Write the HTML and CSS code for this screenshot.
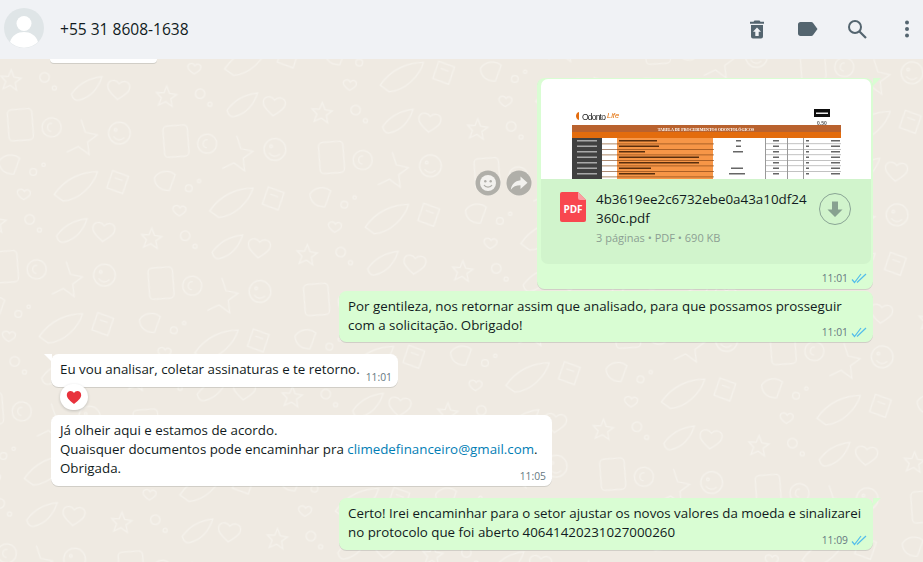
FILE: index.html
```html
<!DOCTYPE html>
<html lang="pt">
<head>
<meta charset="utf-8">
<title>Conversa</title>
<link rel="stylesheet" href="styles.css">
</head>
<body>
<div class="app">
  <header class="topbar">
    <svg class="avatar" viewBox="0 0 40 40"><circle cx="20" cy="20" r="20" fill="#dfe5e7"/><circle cx="20" cy="15.500" r="7.500" fill="#fff"/><path d="M6 34c2-7 8-10 14-10s12 3 14 10a20 20 0 0 1-28 0z" fill="#fff"/></svg>
    <div class="contact">+55 31 8608-1638</div>
    <div class="actions">
      <svg class="icon" viewBox="0 0 24 24"><path fill="#54656f" d="M9.500 3.500h5l1 1.300H19v2H5v-2h3.500zM6 8h12v11.500a2 2 0 0 1-2 2H8a2 2 0 0 1-2-2z"/><path fill="#f0f2f5" d="M12 10.500l4 4.200h-2.300V19h-3.400v-4.300H8z"/></svg>
      <svg class="icon" viewBox="0 0 24 24"><path fill="#54656f" d="M5.500 5h10.700c.8 0 1.500.4 1.900 1l4.400 6-4.400 6c-.4.600-1.100 1-1.900 1H5.500C4 19 3 18 3 16.500v-9C3 6 4 5 5.500 5z"/></svg>
      <svg class="icon" viewBox="0 0 24 24"><circle cx="10" cy="10" r="6" fill="none" stroke="#54656f" stroke-width="2"/><path d="M14.500 14.500l6.500 6.500" stroke="#54656f" stroke-width="2.200" fill="none"/></svg>
      <svg class="icon" viewBox="0 0 24 24"><circle cx="12" cy="5.500" r="2" fill="#54656f"/><circle cx="12" cy="12" r="2" fill="#54656f"/><circle cx="12" cy="18.500" r="2" fill="#54656f"/></svg>
    </div>
  </header>

  <main class="chat">
    <svg class="wallpaper" width="923" height="503">
      <defs>
        <pattern id="doodle" width="230" height="210" patternUnits="userSpaceOnUse" patternTransform="scale(.68) rotate(6)">
          <g fill="none" stroke="#f5f2ec" stroke-width="1.800">
            <path d="M18 14l5 10 11 1-8 7 3 11-10-6-10 6 3-11-8-7 11-1z"/>
            <circle cx="68" cy="20" r="7"/><circle cx="84" cy="34" r="3"/>
            <path d="M110 40c10-18 24-26 42-30-4 18-14 32-30 38-6 2-10-2-12-8z"/>
            <path d="M178 18c6-8 18-4 16 6-1 7-10 12-16 17-6-5-15-10-16-17-2-10 10-14 16-6z"/>
            <rect x="22" y="70" width="36" height="46" rx="6" transform="rotate(-10 40 93)"/>
            <path d="M86 78c8 0 14 6 14 14s-6 14-14 14-14-6-14-14 6-14 14-14zm0 8a6 6 0 1 0 0 12"/>
            <path d="M128 76l8 18 18 2-13 12 4 18-17-10-16 10"/>
            <circle cx="186" cy="90" r="16"/><circle cx="180" cy="86" r="2"/><path d="M178 96c5 5 11 5 16 0"/>
            <path d="M14 150c6-12 20-14 30-8l-6 24c-12 2-22-4-24-16z"/>
            <circle cx="66" cy="160" r="5"/><circle cx="80" cy="148" r="2.500"/>
            <path d="M100 190c14-26 38-38 60-40-4 20-22 44-46 48z"/>
            <path d="M182 146l24 6-6 26-24-6zM186 156l12 3"/>
            <path d="M56 190c3-5 10-3 9 3-1 4-6 7-9 9-4-2-9-5-10-9-1-6 7-8 10-3z"/>
          </g>
        </pattern>
      </defs>
      <rect width="923" height="503" fill="url(#doodle)"/>
    </svg>

    <div class="row in stub"><div class="stub-bubble"></div></div>

    <div class="row out first">
      <div class="reacts">
        <svg class="round" viewBox="0 0 26 26"><circle cx="13" cy="13" r="12.500" fill="#b0afa9"/><circle cx="13" cy="13" r="8" fill="#f2f1ee"/><circle cx="10.300" cy="11.300" r="1.200" fill="#b0afa9"/><circle cx="15.700" cy="11.300" r="1.200" fill="#b0afa9"/><path d="M9 15c1.500 2.800 6.500 2.800 8 0" stroke="#b0afa9" stroke-width="1.200" fill="none"/></svg>
        <svg class="round" viewBox="0 0 26 26"><circle cx="13" cy="13" r="12.500" fill="#b0afa9"/><path d="M14.500 6.500l7 6.200-7 6.300v-3.700c-4.500 0-7.500 1.300-9.700 4.400.7-4.900 3.600-8.700 9.700-9.400z" fill="#f2f1ee"/></svg>
      </div>
      <div class="bubble out-b doc-bubble">
        <svg class="thumb" viewBox="0 0 330 100" width="330" height="100">
          <defs><filter id="soft"><feGaussianBlur stdDeviation="0.700"/></filter></defs>
          <rect width="330" height="100" fill="#fff"/>
          <g filter="url(#soft)">
            <path d="M38 33c-4 1-4 7 0 8z" fill="#e36c0a"/>
            <text x="41" y="41" class="logo">Odonto</text>
            <text x="66" y="39" class="logo-life">Life</text>
            <rect x="273" y="30" width="16" height="8" fill="#111"/>
            <rect x="275" y="33.500" width="12" height="1.500" fill="#eee"/>
            <text x="276" y="46" class="price">0,50</text>
            <rect x="31" y="46" width="269" height="7" fill="#b9622d"/>
            <text x="165" y="51.500" class="ttl" text-anchor="middle">TABELA DE PROCEDIMENTOS ODONTOLÓGICOS</text>
            <rect x="31" y="53" width="269" height="6" fill="#e36c0a"/>
            <rect x="31" y="59" width="30" height="41" fill="#404040"/>
            <rect x="76" y="59" width="96" height="41" fill="#f79646"/>
            <g fill="#5a2f10">
              <rect x="78" y="61" width="38" height="1.500"/><rect x="78" y="66.500" width="40" height="1.500"/><rect x="78" y="72" width="26" height="1.500"/><rect x="78" y="77.500" width="80" height="1.500"/><rect x="78" y="83" width="80" height="1.500"/><rect x="78" y="88.500" width="32" height="1.500"/><rect x="78" y="94" width="36" height="1.500"/>
            </g>
            <g fill="#a8a8a8">
              <rect x="36" y="61" width="20" height="1.500"/><rect x="36" y="66.500" width="20" height="1.500"/><rect x="36" y="72" width="20" height="1.500"/><rect x="36" y="77.500" width="20" height="1.500"/><rect x="36" y="83" width="20" height="1.500"/><rect x="36" y="88.500" width="20" height="1.500"/><rect x="36" y="94" width="20" height="1.500"/>
            </g>
            <g fill="#7a3d12" opacity=".75">
              <rect x="61" y="64.500" width="112" height=".8"/><rect x="61" y="70" width="112" height=".8"/><rect x="61" y="75.500" width="112" height=".8"/><rect x="61" y="81" width="112" height=".8"/><rect x="61" y="86.500" width="112" height=".8"/><rect x="61" y="92" width="112" height=".8"/><rect x="61" y="97.500" width="112" height=".8"/>
            </g>
            <g fill="#999">
              <rect x="224" y="59" width="1" height="41"/><rect x="246" y="59" width="1" height="41"/><rect x="262" y="59" width="1" height="41"/>
              <rect x="224" y="64.500" width="76" height=".6"/><rect x="224" y="70" width="76" height=".6"/><rect x="224" y="75.500" width="76" height=".6"/><rect x="224" y="81" width="76" height=".6"/><rect x="224" y="86.500" width="76" height=".6"/><rect x="224" y="92" width="76" height=".6"/>
            </g>
            <g fill="#666">
              <rect x="195" y="61" width="5" height="1.500"/><rect x="195" y="66.500" width="5" height="1.500"/><rect x="192" y="72" width="10" height="1.500"/><rect x="190" y="88.500" width="12" height="1.500"/><rect x="188" y="94" width="16" height="1.500"/>
              <rect x="232" y="61" width="6" height="1.500"/><rect x="232" y="66.500" width="6" height="1.500"/><rect x="232" y="72" width="6" height="1.500"/><rect x="232" y="77.500" width="6" height="1.500"/><rect x="232" y="83" width="6" height="1.500"/><rect x="232" y="88.500" width="6" height="1.500"/><rect x="232" y="94" width="6" height="1.500"/>
              <rect x="290" y="61" width="9" height="1.500"/><rect x="290" y="66.500" width="9" height="1.500"/><rect x="290" y="72" width="9" height="1.500"/><rect x="290" y="77.500" width="9" height="1.500"/><rect x="290" y="83" width="9" height="1.500"/><rect x="290" y="88.500" width="9" height="1.500"/><rect x="290" y="94" width="9" height="1.500"/>
              <rect x="265" y="61" width="3" height="1.500"/><rect x="265" y="66.500" width="3" height="1.500"/><rect x="265" y="72" width="3" height="1.500"/><rect x="265" y="77.500" width="3" height="1.500"/><rect x="265" y="83" width="3" height="1.500"/><rect x="265" y="88.500" width="3" height="1.500"/><rect x="265" y="94" width="3" height="1.500"/>
            </g>
          </g>
        </svg>
        <div class="doc">
          <svg class="pdf" viewBox="0 0 26 30"><path d="M2 0h16l8 8v20a2 2 0 0 1-2 2H2a2 2 0 0 1-2-2V2a2 2 0 0 1 2-2z" fill="#f8474f"/><path d="M18 0l8 8h-6a2 2 0 0 1-2-2z" fill="#fb9ea2"/><text x="13" y="21" class="pdf-label" text-anchor="middle">PDF</text></svg>
          <div class="doc-info">
            <div class="doc-name">4b3619ee2c6732ebe0a43a10df24<br>360c.pdf</div>
            <div class="doc-meta">3 páginas • PDF • 690 KB</div>
          </div>
          <svg class="download" viewBox="0 0 34 34"><circle cx="17" cy="17" r="15.500" fill="none" stroke="#8aa595" stroke-width="1"/><path d="M14 9.500h6v8h4.500L17 25l-7.500-7.500H14z" fill="#87a190"/></svg>
        </div>
        <div class="stamp doc-stamp">11:01 <svg class="tick" viewBox="0 0 16 11"><path d="M1 6.500l2.500 3L10 1M6 9.500L15 1" fill="none" stroke="#53bdeb" stroke-width="1.200"/></svg></div>
      </div>
    </div>

    <div class="row out second">
      <div class="bubble out-b text-bubble">
        <p class="msg">Por gentileza, nos retornar assim que analisado, para que possamos prosseguir<br>com a solicitação. Obrigado!</p>
        <div class="stamp">11:01 <svg class="tick" viewBox="0 0 16 11"><path d="M1 6.500l2.500 3L10 1M6 9.500L15 1" fill="none" stroke="#53bdeb" stroke-width="1.200"/></svg></div>
      </div>
    </div>

    <div class="row in third">
      <div class="bubble in-b short tail-in">
        <p class="msg">Eu vou analisar, coletar assinaturas e te retorno.</p>
        <div class="stamp">11:01</div>
        <div class="reaction"><svg viewBox="0 0 20 18" class="heart"><path d="M10 17C6 13.500 1 10.500 1 5.800 1 2.800 3.300 1 5.700 1 7.500 1 9 2 10 3.500 11 2 12.500 1 14.300 1 16.700 1 19 2.800 19 5.800c0 4.700-5 7.700-9 11.200z" fill="#e8323c"/></svg></div>
      </div>
    </div>

    <div class="row in fourth">
      <div class="bubble in-b long">
        <p class="msg">Já olheir aqui e estamos de acordo.<br>Quaisquer documentos pode encaminhar pra <span class="link">climedefinanceiro@gmail.com</span>.<br>Obrigada.</p>
        <div class="stamp">11:05</div>
      </div>
    </div>

    <div class="row out fifth">
      <div class="bubble out-b text-bubble tail-out">
        <p class="msg">Certo! Irei encaminhar para o setor ajustar os novos valores da moeda e sinalizarei<br>no protocolo que foi aberto 40641420231027000260</p>
        <div class="stamp">11:09 <svg class="tick" viewBox="0 0 16 11"><path d="M1 6.500l2.500 3L10 1M6 9.500L15 1" fill="none" stroke="#53bdeb" stroke-width="1.200"/></svg></div>
      </div>
    </div>
  </main>
</div>
</body>
</html>
```
FILE: styles.css
```css
* { box-sizing: border-box; }
html, body { margin: 0; padding: 0; height: 100%; overflow: hidden; }
body { font-family: "Open Sans", "Noto Sans", "Liberation Sans", sans-serif; color: #111b21; background: #efeae2; }
.app { display: flex; flex-direction: column; width: 923px; height: 562px; }

.topbar { height: 59px; flex: none; display: flex; align-items: center; padding: 0 4px; background: #f0f2f5; }
.avatar { width: 40px; height: 40px; flex: none; margin-top: -3px; }
.contact { margin-left: 16px; font-size: 15.550px; margin-top: -1px; }
.actions { margin-left: auto; display: flex; gap: 26px; margin-top: -1px; }
.icon { width: 24px; height: 24px; display: block; }

.chat { position: relative; flex: 1; overflow: hidden; background: #efeae2; padding: 0 50px 0 51px; }
.wallpaper { position: absolute; left: 0; top: 0; }
.row { position: relative; display: flex; }
.row.out { justify-content: flex-end; }
.row.in { justify-content: flex-start; }
.stub-bubble { width: 107px; height: 4px; margin-left: -1px; background: #fff; border-radius: 0 0 7px 7px; box-shadow: 0 1px .5px rgba(11,20,26,.13); }
.first { margin-top: 15px; align-items: center; gap: 5px; }
.second { margin-top: 2px; }
.third { margin-top: 12px; }
.fourth { margin-top: 28px; }
.fifth { margin-top: 12px; }

.reacts { display: flex; gap: 5px; margin-top: -1px; }
.round { width: 26px; height: 26px; display: block; }

.bubble { position: relative; border-radius: 7.500px; box-shadow: 0 1px .5px rgba(11,20,26,.13); }
.out-b { background: #d9fdd3; }
.in-b { background: #fff; }
.msg { margin: 0; font-size: 13.330px; line-height: 19px; white-space: nowrap; }
.link { color: #027eb5; }

.text-bubble { width: 534px; height: 51px; padding: 6px 9px; }
.fifth .text-bubble { height: 52px; }
.short { width: 347px; height: 33px; padding: 6px 9px; }
.long { width: 501px; height: 71px; padding: 6px 9px; }

.stamp { position: absolute; right: 6px; bottom: 2px; display: flex; align-items: center; gap: 3px; font-size: 10.300px; line-height: 15px; color: #667781; }
.tick { width: 16px; height: 11px; display: block; }

.doc-bubble { width: 336px; height: 211px; padding: 1px 2px 3px 4px; }
.thumb { display: block; border-radius: 7px 7px 0 0; }
.doc { width: 330px; height: 85px; display: flex; align-items: flex-start; background: #d1f4cc; border-radius: 0 0 7px 7px; padding: 11px 19px 0 19px; }
.pdf { width: 26px; height: 30px; flex: none; margin-top: 2px; }
.pdf-label { font: 700 10px "Open Sans", sans-serif; fill: #fff; }
.doc-info { margin-left: 10px; flex: 1; }
.doc-name { font-size: 13.400px; line-height: 19px; white-space: nowrap; }
.doc-meta { margin-top: 2px; font-size: 11px; line-height: 16px; color: #8c9f93; }
.download { width: 34px; height: 34px; flex: none; margin-top: 2px; }
.doc-stamp { bottom: 3px; }

.reaction { position: absolute; left: 9px; top: 30px; width: 28px; height: 26px; display: flex; align-items: center; justify-content: center; background: #fff; border-radius: 13px; box-shadow: 0 1px 3px rgba(11,20,26,.2); }
.heart { width: 16px; height: 15px; display: block; }

.tail-in::before { content: ""; position: absolute; left: -7px; top: 0; border-style: solid; border-width: 0 8px 8px 0; border-color: transparent #fff transparent transparent; }
.tail-out::after, .doc-bubble::after { content: ""; position: absolute; right: -8px; top: 0; border-style: solid; border-width: 8px 8px 0 0; border-color: #d9fdd3 transparent transparent transparent; }

.logo { font: 400 8.500px "Liberation Sans", sans-serif; letter-spacing: -.8px; fill: #222; }
.logo-life { font: italic 7.500px "Liberation Sans", sans-serif; fill: #e36c0a; }
.ttl { font: 700 4px "Liberation Serif", serif; fill: #fff; }
.price { font: 700 5px "Liberation Sans", sans-serif; fill: #555; }
```
